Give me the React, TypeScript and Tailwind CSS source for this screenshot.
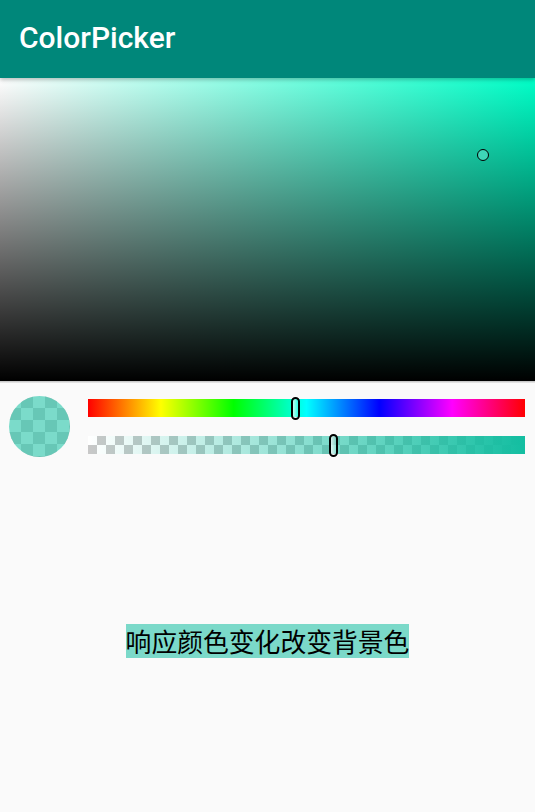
import React from "react";

export default function App() {
  const checker9 =
    "repeating-conic-gradient(#c8c8c8 0% 25%, #ffffff 0% 50%) 0 0 / 18px 18px";
  const checker12 =
    "repeating-conic-gradient(#d2d2d2 0% 25%, #ffffff 0% 50%) 0 0 / 24px 24px";
  return (
    <div
      className="w-[535px] h-[812px] bg-[#fafafa] flex flex-col overflow-hidden"
      style={{ fontFamily: "Roboto, 'Noto Sans', sans-serif" }}
    >
      <header className="h-[78px] shrink-0 bg-[#00877a] flex items-center pl-[19px] relative z-10 shadow-[0_2px_4px_rgba(0,0,0,0.25)]">
        <span className="text-white text-[30px] font-medium tracking-[0px] leading-none pb-[2px]">
          ColorPicker
        </span>
      </header>

      <div className="h-[303px] shrink-0 relative bg-[linear-gradient(to_right,#ffffff,#00ffc8)]">
        <div className="absolute inset-0 bg-[linear-gradient(to_bottom,rgba(0,0,0,0),#000000)]" />
        <div className="absolute left-[477px] top-[71px] w-[12px] h-[12px] rounded-full border-[1.5px] border-black bg-[#3ed6b8]" />
      </div>
      <div className="h-[2px] shrink-0 bg-[linear-gradient(to_bottom,#bdbdbd,#eeeeee)]" />

      <div className="flex items-center pt-[13px] pb-[13px] pl-[9px] pr-[10px] shrink-0">
        <div
          className="w-[61px] h-[61px] rounded-full overflow-hidden relative shrink-0"
          style={{ background: checker12 }}
        >
          <div className="absolute inset-0 bg-[rgba(19,190,161,0.56)]" />
        </div>
        <div className="flex-1 ml-[18px] flex flex-col gap-[19px]">
          <div className="relative h-[18px] bg-[linear-gradient(to_right,#ff0000,#ffff00,#00ff00,#00ffff,#0000ff,#ff00ff,#ff0000)]">
            <div className="absolute left-[203px] top-[-2px] w-[9px] h-[23px] rounded-full border-2 border-black bg-[linear-gradient(to_right,rgba(255,255,255,0.75),rgba(255,255,255,0.2))]" />
          </div>
          <div className="relative h-[18px]" style={{ background: checker9 }}>
            <div className="absolute inset-0 bg-[linear-gradient(to_right,rgba(19,190,161,0),rgb(19,190,161))]" />
            <div className="absolute left-[241px] top-[-2px] w-[9px] h-[23px] rounded-full border-2 border-black bg-[linear-gradient(to_right,rgba(255,255,255,0.75),rgba(255,255,255,0.2))]" />
          </div>
        </div>
      </div>

      <div className="flex-1 flex items-center justify-center">
        <span
          className="bg-[#7bd9c9] text-black text-[25.8px] leading-[34px]"
          style={{ fontFamily: "'Noto Sans CJK SC', sans-serif" }}
        >
          响应颜色变化改变背景色
        </span>
      </div>
    </div>
  );
}
